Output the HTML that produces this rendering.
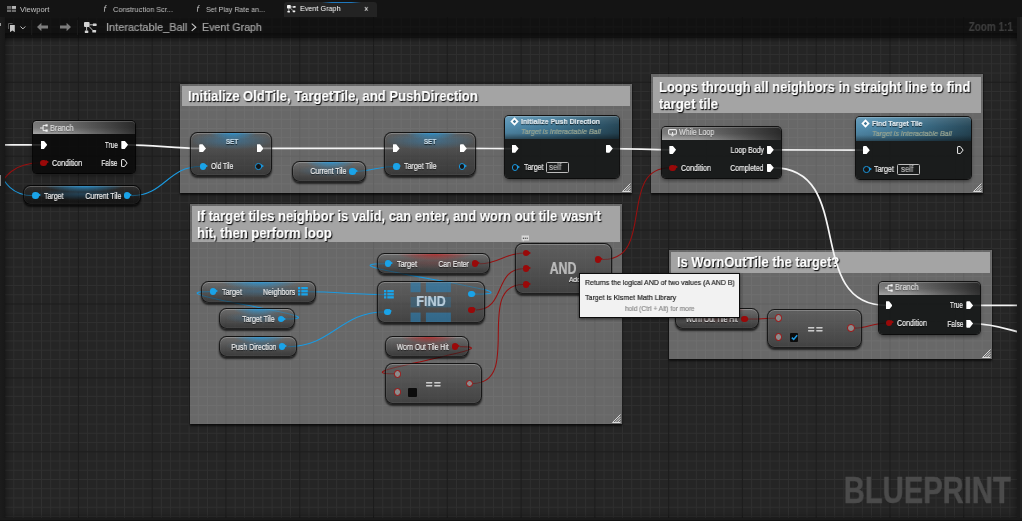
<!DOCTYPE html>
<html lang="en">
<head>
<meta charset="utf-8">
<title>Interactable_Ball - Event Graph</title>
<style>
*{box-sizing:border-box;margin:0;padding:0}
html,body{width:1022px;height:521px;overflow:hidden;background:#252525}
body{position:relative;font-family:"Liberation Sans",sans-serif;color:#e6e6e6;font-size:8.2px;line-height:1}
.abs{position:absolute}
#grid{position:absolute;left:0;top:0;width:1022px;height:521px}
#wires{position:absolute;left:0;top:0;width:1022px;height:521px;pointer-events:none}
/* chrome */
#tabbar{position:absolute;left:0;top:0;width:1022px;height:17px;background:#141414}
#acttab{position:absolute;left:284px;top:2px;width:92.5px;height:15px;background:#232323;border-radius:3px 3px 0 0}
#actline{position:absolute;left:322px;top:2px;width:39px;height:1px;background:linear-gradient(90deg,rgba(30,120,190,0),#1e78be 25%,#1e78be 75%,rgba(30,120,190,0))}
#toolbar{position:absolute;left:4.5px;top:17px;width:1013px;height:21px;background:rgba(9,9,9,.68)}
#tbshadow{position:absolute;left:4px;top:38px;width:1014px;height:4px;background:linear-gradient(rgba(0,0,0,.3),rgba(0,0,0,0))}
#rightstrip{position:absolute;left:1017px;top:17px;width:5px;height:504px;background:linear-gradient(90deg,#1b1b1b 0,#1b1b1b 55%,#222 56%)}
#vig{position:absolute;left:4.5px;top:33px;width:1012.4px;height:484.6px;box-shadow:inset 0 0 7px 0 rgba(0,0,0,.5);pointer-events:none}
#leftstrip{position:absolute;left:0;top:17px;width:4.5px;height:504px;background:linear-gradient(90deg,#1c1c1c,#181818)}
#botstrip{position:absolute;left:0;top:517.6px;width:1022px;height:3.4px;background:linear-gradient(180deg,#1b1b1b 0,#1b1b1b 62%,#121212 66%)}
.t.tb{color:#c2c2c2;text-shadow:none;-webkit-text-stroke:0}
.t.tb.act{color:#fff}
.t.tb.fi{font-style:italic;font-family:"Liberation Serif",serif;color:#d4d4d4}
.t.cr{color:#a4a4a4;text-shadow:none}
.t.zm{color:#3d3d3d;text-shadow:none;font-weight:bold}
.t.wm{color:#4b4b4b;text-shadow:none;font-weight:bold;-webkit-text-stroke:.5px #4b4b4b}
/* comments */
.comment{position:absolute;background:rgba(228,228,228,.35);box-shadow:0 1.5px 2px rgba(0,0,0,.65),0 0 0 .5px rgba(0,0,0,.35)}
.comment .ct{position:absolute;left:2px;top:2.3px;right:2px;background:#a4a4a4}
.t.ttl{font-weight:bold;color:#fff;text-shadow:1px 1px 0 #1a1a1a,1px 1px 1.5px #000}
.grip{position:absolute;right:1px;bottom:1px;width:9px;height:9px}
/* nodes */
.node{position:absolute;border-radius:4px;background:rgba(9,9,9,.86);box-shadow:0 0 0 1px rgba(0,0,0,.8),0 2px 4px rgba(0,0,0,.55)}
.node.lt{background:rgba(13,15,15,.86)}
.node .hd{position:absolute;left:0;top:0;right:0;border-radius:3.5px 3.5px 0 0}
.hd.gray{height:13.1px;background:linear-gradient(90deg,rgba(22,22,22,0) 0%,rgba(22,22,22,.1) 30%,rgba(22,22,22,.8) 100%),linear-gradient(180deg,#747474 0%,#7c7c7c 50%,#a6a6a6 100%);box-shadow:inset 0 1px 0 rgba(255,255,255,.18)}
.hd.blue{height:23.4px;background:linear-gradient(180deg,rgba(255,255,255,.12),rgba(255,255,255,0) 40%,rgba(0,0,0,.12) 75%,rgba(10,14,16,.55) 100%),linear-gradient(100deg,#5792b3,#427a98 40%,#264656 100%);box-shadow:inset 0 1px 0 rgba(255,255,255,.2)}
.t{position:absolute;white-space:nowrap;color:#f0f0f0;text-shadow:0 1px 1px rgba(0,0,0,.8);will-change:transform;-webkit-text-stroke:.2px currentColor}
.t.b{font-weight:bold;color:#e2ecf2}
.t.b.set{color:#c6dbe8}
.t.i{font-style:italic;color:#9ba792;text-shadow:none}
.t.h{color:#dedede;text-shadow:0 1px 1px rgba(0,0,0,.35)}
.t.sf{color:#b4b4b4;text-shadow:none}
.t.big{font-weight:bold;text-shadow:none}
.t.tp{color:#1c1c1c;text-shadow:none}
.t.tp2{color:#8c8c8c;text-shadow:none}
.tip{position:absolute;background:#f2f2f2;border:1px solid #0c0c0c;box-shadow:0 1px 3px rgba(0,0,0,.6)}
/* pins */
.ex{position:absolute;width:6.8px;height:8.2px;background:#fff;clip-path:polygon(0 8%,8% 0,50% 0,100% 50%,50% 100%,8% 100%,0 92%)}
.exo{position:absolute;width:6.8px;height:8.2px}
.pin{position:absolute;width:6.5px;height:6.5px;border-radius:50%}
.pin:after{content:"";position:absolute;left:5.4px;top:.85px;border-left:3.6px solid;border-top:2.4px solid transparent;border-bottom:2.4px solid transparent;border-left-color:inherit}
.pin.bl{background:#1aa3e8;border-color:#1aa3e8}
.pin.rd{background:#990909;border-color:#990909}
.pin.o{background:#161616;border:1.4px solid}
.pin.o:after{left:4.6px;top:-.4px}
.pin.o.bl{border-color:#1b96dc}
.ring{position:absolute;width:7.8px;height:7.8px;border-radius:50%;border:1.5px solid #a00e0e;background:#8c8c8c}
.self{position:absolute;border:1px solid #bdbdbd;border-radius:1.5px}
/* variable / compact nodes */
.var{position:absolute;border-radius:7.5px;border:1px solid rgba(0,0,0,.68);box-shadow:inset 0 1px 0 rgba(255,255,255,.2),inset 0 0 0 1px rgba(255,255,255,.04),0 2px 2px rgba(0,0,0,.7);background:linear-gradient(180deg,rgba(112,112,112,.56),rgba(66,66,66,.56) 50%,rgba(26,26,26,.58) 100%)}
.var.st{background:linear-gradient(180deg,rgba(86,86,86,.56),rgba(46,46,46,.57) 55%,rgba(26,26,26,.58))}
.var.dk{background:linear-gradient(180deg,rgba(54,54,54,.56),rgba(28,28,28,.56) 50%,rgba(6,6,6,.6) 100%)}
.var.cmp{background:linear-gradient(180deg,rgba(88,88,88,.56),rgba(40,40,40,.58))}
.var .glow{position:absolute;left:2%;right:2%;top:0;height:100%;border-radius:7px}
.glow.bl{background:radial-gradient(ellipse 36% 34% at 52% 0,rgba(40,150,215,.85),rgba(40,150,215,0)),radial-gradient(ellipse 46% 32% at 50% 46%,rgba(40,140,205,.3),rgba(40,140,205,0))}
.glow.rd{background:radial-gradient(ellipse 36% 34% at 52% 0,rgba(185,35,35,.8),rgba(185,35,35,0)),radial-gradient(ellipse 46% 32% at 50% 46%,rgba(170,40,40,.2),rgba(170,40,40,0))}
.var .glow.set{background:radial-gradient(ellipse 30% 16% at 52% 0,rgba(40,150,215,.8),rgba(40,150,215,0)),radial-gradient(ellipse 55% 22% at 50% 18%,rgba(40,140,205,.45),rgba(40,140,205,0))}
</style>
</head>
<body>
<svg id="grid" width="1022" height="521"><rect width="1022" height="521" fill="#252525"/><path d="M13.84 0V521M23.07 0V521M32.29 0V521M41.51 0V521M50.73 0V521M59.95 0V521M69.18 0V521M87.62 0V521M96.84 0V521M106.07 0V521M115.29 0V521M124.51 0V521M133.74 0V521M142.96 0V521M161.4 0V521M170.62 0V521M179.85 0V521M189.07 0V521M198.29 0V521M207.52 0V521M216.74 0V521M235.18 0V521M244.41 0V521M253.63 0V521M262.85 0V521M272.07 0V521M281.3 0V521M290.52 0V521M308.96 0V521M318.19 0V521M327.41 0V521M336.63 0V521M345.85 0V521M355.07 0V521M364.3 0V521M382.74 0V521M391.97 0V521M401.19 0V521M410.41 0V521M419.63 0V521M428.86 0V521M438.08 0V521M456.52 0V521M465.75 0V521M474.97 0V521M484.19 0V521M493.41 0V521M502.63 0V521M511.86 0V521M530.3 0V521M539.52 0V521M548.75 0V521M557.97 0V521M567.19 0V521M576.41 0V521M585.64 0V521M604.08 0V521M613.31 0V521M622.53 0V521M631.75 0V521M640.97 0V521M650.2 0V521M659.42 0V521M677.86 0V521M687.09 0V521M696.31 0V521M705.53 0V521M714.75 0V521M723.98 0V521M733.2 0V521M751.64 0V521M760.87 0V521M770.09 0V521M779.31 0V521M788.53 0V521M797.75 0V521M806.98 0V521M825.42 0V521M834.64 0V521M843.87 0V521M853.09 0V521M862.31 0V521M871.53 0V521M880.76 0V521M899.2 0V521M908.43 0V521M917.65 0V521M926.87 0V521M936.09 0V521M945.32 0V521M954.54 0V521M972.98 0V521M982.21 0V521M991.43 0V521M1000.65 0V521M1009.87 0V521M1019.1 0V521M0 17.64H1022M0 26.88H1022M0 36.11H1022M0 45.35H1022M0 54.59H1022M0 63.83H1022M0 73.06H1022M0 91.54H1022M0 100.78H1022M0 110.01H1022M0 119.25H1022M0 128.49H1022M0 137.73H1022M0 146.96H1022M0 165.44H1022M0 174.68H1022M0 183.91H1022M0 193.15H1022M0 202.39H1022M0 211.63H1022M0 220.86H1022M0 239.34H1022M0 248.58H1022M0 257.81H1022M0 267.05H1022M0 276.29H1022M0 285.52H1022M0 294.76H1022M0 313.24H1022M0 322.48H1022M0 331.71H1022M0 340.95H1022M0 350.19H1022M0 359.43H1022M0 368.66H1022M0 387.14H1022M0 396.38H1022M0 405.61H1022M0 414.85H1022M0 424.09H1022M0 433.32H1022M0 442.56H1022M0 461.04H1022M0 470.28H1022M0 479.51H1022M0 488.75H1022M0 497.99H1022M0 507.23H1022M0 516.46H1022" stroke="#303030" stroke-width="1" fill="none"/><path d="M4.62 0V521M78.4 0V521M152.18 0V521M225.96 0V521M299.74 0V521M373.52 0V521M447.3 0V521M521.08 0V521M594.86 0V521M668.64 0V521M742.42 0V521M816.2 0V521M889.98 0V521M963.76 0V521M0 8.4H1022M0 82.3H1022M0 156.2H1022M0 230.1H1022M0 304.0H1022M0 377.9H1022M0 451.8H1022" stroke="#1d1d1d" stroke-width="1" fill="none"/></svg>
<!-- COMMENTS -->
<div class="comment" style="left:180.3px;top:83.5px;width:451.6px;height:109.5px"><div class="ct" style="height:20.6px"></div><svg class="grip" viewBox="0 0 9 9" stroke="#e4e4e4" stroke-width=".9" fill="none"><path d="M.5 8.5L8.5 .5M2.9 8.5L8.5 2.9M5.3 8.5L8.5 5.3M7.6 8.5L8.5 7.6M.5 8.5H8.5"/></svg></div>
<div class="t ttl" style="left:187.5px;transform-origin:0 50%;transform:scaleX(0.847);top:87.16px;font-size:15.4px;line-height:18.48px;">Initialize OldTile, TargetTile, and PushDirection</div>
<div class="comment" style="left:650.8px;top:74.3px;width:332.0px;height:118.9px"><div class="ct" style="height:36.2px"></div><svg class="grip" viewBox="0 0 9 9" stroke="#e4e4e4" stroke-width=".9" fill="none"><path d="M.5 8.5L8.5 .5M2.9 8.5L8.5 2.9M5.3 8.5L8.5 5.3M7.6 8.5L8.5 7.6M.5 8.5H8.5"/></svg></div>
<div class="t ttl" style="left:658.5px;transform-origin:0 50%;transform:scaleX(0.843);top:78.36px;font-size:15.4px;line-height:18.48px;">Loops through all neighbors in straight line to find</div>
<div class="t ttl" style="left:658.5px;transform-origin:0 50%;transform:scaleX(0.851);top:94.76px;font-size:15.4px;line-height:18.48px;">target tile</div>
<div class="comment" style="left:189.6px;top:203.6px;width:432.7px;height:220.2px"><div class="ct" style="height:36.6px"></div><svg class="grip" viewBox="0 0 9 9" stroke="#e4e4e4" stroke-width=".9" fill="none"><path d="M.5 8.5L8.5 .5M2.9 8.5L8.5 2.9M5.3 8.5L8.5 5.3M7.6 8.5L8.5 7.6M.5 8.5H8.5"/></svg></div>
<div class="t ttl" style="left:197.3px;transform-origin:0 50%;transform:scaleX(0.846);top:207.36px;font-size:15.4px;line-height:18.48px;">If target tiles neighbor is valid, can enter, and worn out tile wasn't</div>
<div class="t ttl" style="left:197.3px;transform-origin:0 50%;transform:scaleX(0.848);top:223.76px;font-size:15.4px;line-height:18.48px;">hit, then perform loop</div>
<div class="comment" style="left:669px;top:250px;width:322.5px;height:109.4px"><div class="ct" style="height:20.4px"></div><svg class="grip" viewBox="0 0 9 9" stroke="#e4e4e4" stroke-width=".9" fill="none"><path d="M.5 8.5L8.5 .5M2.9 8.5L8.5 2.9M5.3 8.5L8.5 5.3M7.6 8.5L8.5 7.6M.5 8.5H8.5"/></svg></div>
<div class="t ttl" style="left:677.2px;transform-origin:0 50%;transform:scaleX(0.842);top:252.86px;font-size:15.4px;line-height:18.48px;">Is WornOutTile the target?</div>
<!-- WIRES -->
<svg id="wires" width="1022" height="521" fill="none" stroke-linecap="round">
<path d="M-30 144.8C-6.3 144.8 17.3 144.8 41 144.8" stroke="#f4f4f4" stroke-width="1.75"/>
<path d="M128 144.8C153.2 144.8 174.8 148.4 200 148.4" stroke="#f4f4f4" stroke-width="1.75"/>
<path d="M263 148.4C306.5 148.4 350.0 148.4 393.5 148.4" stroke="#f4f4f4" stroke-width="1.75"/>
<path d="M466.5 148.4C481.9 148.4 497.1 148.6 512.5 148.6" stroke="#f4f4f4" stroke-width="1.75"/>
<path d="M612.5 148.6C632.1 148.6 650.4 149.8 670 149.8" stroke="#f4f4f4" stroke-width="1.75"/>
<path d="M773.5 149.8C803.8 149.8 833.7 150.2 864 150.2" stroke="#f4f4f4" stroke-width="1.75"/>
<path d="M773.5 167.8C857.0 167.8 803.0 305.4 886.5 305.4" stroke="#f4f4f4" stroke-width="1.75"/>
<path d="M973 305.4C995.3 305.4 1017.7 305.4 1040 305.4" stroke="#f4f4f4" stroke-width="1.75"/>
<path d="M973 323.6C1003.0 323.6 1020.0 336.6 1050 336.6" stroke="#f4f4f4" stroke-width="1.75"/>
<path d="M-2 190C4 176 14 163 41 162.8" stroke="#981010" stroke-width="1.05"/>
<path d="M-2 170C4 182 12 195.6 33 195.6" stroke="#1b9ae0" stroke-width="1.05"/>
<path d="M132 195.6C164.5 195.6 167.7 166.4 200.2 166.4" stroke="#1b9ae0" stroke-width="1.05"/>
<path d="M357.5 171.3C371.1 171.3 379.9 166.4 393.5 166.4" stroke="#1b9ae0" stroke-width="1.05"/>
<path d="M480 263.7C498.0 263.7 505.4 253.1 523.4 253.1" stroke="#981010" stroke-width="1.05"/>
<path d="M476.2 309.9C505.7 309.9 493.9 268.7 523.4 268.7" stroke="#981010" stroke-width="1.05"/>
<path d="M473.2 383.4C522.9 383.4 473.7 284.4 523.4 284.4" stroke="#981010" stroke-width="1.05"/>
<path d="M460 346.6C517.7 346.6 336.1 373.7 393.8 373.7" stroke="#981010" stroke-width="1.05"/>
<path d="M308 291.8C334.4 291.8 358.1 294.6 384.5 294.6" stroke="#1b9ae0" stroke-width="1.05"/>
<path d="M285.8 319C350.2 319 145.4 291.6 209.8 291.6" stroke="#1b9ae0" stroke-width="1.05"/>
<path d="M288 346.7C331.8 346.7 340.7 311.9 384.5 311.9" stroke="#1b9ae0" stroke-width="1.05"/>
<path d="M476.2 294.1C552.2 294.1 309.0 263.7 385 263.7" stroke="#1b9ae0" stroke-width="1.05"/>
<path d="M603 259.5C655.9 259.5 617.1 167.8 670 167.8" stroke="#981010" stroke-width="1.05"/>
<path d="M749.2 319C758.0 319 766.2 318.3 775 318.3" stroke="#981010" stroke-width="1.05"/>
<path d="M854.5 328.1C866.9 328.1 874.0 322.9 886.4 322.9" stroke="#981010" stroke-width="1.05"/>
</svg>
<!-- NODES -->
<div class="var dk" style="left:23.4px;top:184.6px;width:117.4px;height:20.6px;"><div class="glow bl"></div></div>
<div class="var st" style="left:190.4px;top:132.4px;width:82.0px;height:44.0px;"><div class="glow bl set"></div></div>
<div class="var" style="left:291.5px;top:160.5px;width:74.8px;height:21.1px;"><div class="glow bl"></div></div>
<div class="var st" style="left:384.2px;top:132.4px;width:92.0px;height:44.0px;"><div class="glow bl set"></div></div>
<div class="var" style="left:376.5px;top:252.8px;width:113.1px;height:21.5px;"><div class="glow rd"></div></div>
<div class="var" style="left:200.6px;top:280.8px;width:115.1px;height:22.3px;"><div class="glow bl"></div></div>
<div class="var cmp" style="left:376.5px;top:280.6px;width:108.1px;height:42.1px;overflow:hidden"><svg class="abs" style="left:0;top:0" width="108" height="42" viewBox="0 0 108 42" fill="rgba(38,135,195,.55)"><rect x="32.6" y=".4" width="10" height="9.8"/><rect x="47.9" y=".4" width="25" height="9.8"/><rect x="32.6" y="15" width="10" height="10.4" opacity=".55"/><rect x="47.9" y="15" width="25" height="10.4" opacity=".55"/><rect x="32.6" y="30.6" width="10" height="10.4"/><rect x="47.9" y="30.6" width="25" height="10.4"/></svg></div>
<div class="var" style="left:219.3px;top:308.3px;width:75.5px;height:21.0px;"><div class="glow bl"></div></div>
<div class="var" style="left:219.3px;top:335.9px;width:77.8px;height:21.3px;"><div class="glow bl"></div></div>
<div class="var" style="left:385.2px;top:335.9px;width:84.3px;height:21.2px;"><div class="glow rd"></div></div>
<div class="var cmp" style="left:385.2px;top:363.4px;width:96.9px;height:40.2px;"></div>
<div class="var cmp" style="left:514.5px;top:243px;width:97.0px;height:50.8px;"></div>
<div class="var" style="left:674.8px;top:308.2px;width:83.8px;height:21.3px;"><div class="glow rd"></div></div>
<div class="var cmp" style="left:767px;top:308.6px;width:95.3px;height:39.4px;"></div>
<div class="node" style="left:33.1px;top:120.8px;width:102.1px;height:52.5px;"><div class="hd gray"></div></div>
<div class="node lt" style="left:504.8px;top:115.6px;width:114.7px;height:62.0px;"><div class="hd blue"></div></div>
<div class="node lt" style="left:662.1px;top:126.7px;width:119.1px;height:51.2px;"><div class="hd gray"></div></div>
<div class="node lt" style="left:856.1px;top:117.4px;width:114.7px;height:62.1px;"><div class="hd blue"></div></div>
<div class="node lt" style="left:878.8px;top:281.8px;width:101.5px;height:52.2px;"><div class="hd gray"></div></div>
<svg class="abs" style="left:40px;top:123.6px" width="8" height="8" viewBox="0 0 8 8" fill="none" stroke="#f4f4f4" stroke-width=".95"><path d="M0 4H3.1M6 1.4H3.1V6.6H6"/><rect x="5.5" y=".3" width="2.2" height="2.2" fill="#f4f4f4" stroke="none"/><rect x="5.5" y="5.5" width="2.2" height="2.2" fill="#f4f4f4" stroke="none"/></svg>
<div class="t h" style="left:49.7px;transform-origin:0 50%;transform:scaleX(0.887);top:122.66px;font-size:8.4px;line-height:10.08px;">Branch</div>
<div class="ex" style="left:40.5px;top:140.7px"></div>
<div class="t " style="right:904.2px;transform-origin:100% 50%;transform:scaleX(0.772);top:139.76px;font-size:8.4px;line-height:10.08px;">True</div>
<div class="ex" style="left:121.3px;top:140.7px"></div>
<div class="pin rd" style="left:40.3px;top:159.55px"></div>
<div class="t " style="left:52px;transform-origin:0 50%;transform:scaleX(0.851);top:157.76px;font-size:8.4px;line-height:10.08px;">Condition</div>
<div class="t " style="right:904.2px;transform-origin:100% 50%;transform:scaleX(0.784);top:158.26px;font-size:8.4px;line-height:10.08px;">False</div>
<svg class="exo" style="left:121.3px;top:159.2px" viewBox="0 0 7 8.6" preserveAspectRatio="none"><path d="M.6 1.2Q.6.6 1.2.6H3.4L6.3 4.3 3.4 8H1.2Q.6 8 .6 7.4Z" fill="none" stroke="#fff" stroke-width="1"/></svg>
<div class="pin bl" style="left:32.2px;top:192.35px"></div>
<div class="t " style="left:44.1px;transform-origin:0 50%;transform:scaleX(0.835);top:190.56px;font-size:8.4px;line-height:10.08px;">Target</div>
<div class="t " style="right:900.4px;transform-origin:100% 50%;transform:scaleX(0.829);top:190.56px;font-size:8.4px;line-height:10.08px;">Current Tile</div>
<div class="pin bl" style="left:123.9px;top:192.35px"></div>
<div class="t b set" style="left:231.5px;transform:translateX(-50%) scaleX(0.791);top:136.7px;font-size:8px;line-height:9.6px;">SET</div>
<div class="ex" style="left:199.2px;top:144.3px"></div>
<div class="ex" style="left:256.7px;top:144.3px"></div>
<div class="pin bl" style="left:199.6px;top:163.15px"></div>
<div class="t " style="left:210.9px;transform-origin:0 50%;transform:scaleX(0.783);top:161.36px;font-size:8.4px;line-height:10.08px;">Old Tile</div>
<div class="pin bl o" style="left:255.3px;top:163.15px"></div>
<div class="t " style="right:675.3px;transform-origin:100% 50%;transform:scaleX(0.829);top:166.26px;font-size:8.4px;line-height:10.08px;">Current Tile</div>
<div class="pin bl" style="left:349.3px;top:168.05px"></div>
<div class="t b set" style="left:430.3px;transform:translateX(-50%) scaleX(0.791);top:136.7px;font-size:8px;line-height:9.6px;">SET</div>
<div class="ex" style="left:392.8px;top:144.3px"></div>
<div class="ex" style="left:460px;top:144.3px"></div>
<div class="pin bl" style="left:393px;top:163.15px"></div>
<div class="t " style="left:404.4px;transform-origin:0 50%;transform:scaleX(0.841);top:161.36px;font-size:8.4px;line-height:10.08px;">Target Tile</div>
<div class="pin bl o" style="left:458.7px;top:163.15px"></div>
<svg class="abs" style="left:509.8px;top:117.2px" width="9" height="9" viewBox="0 0 8.4 8.4"><path d="M4.2 .3L8.1 4.2 4.2 8.1 .3 4.2Z" fill="#fff"/><path d="M4.2 2.6L5.8 4.2 4.2 5.8 2.6 4.2Z" fill="#3f7797"/></svg>
<div class="t b" style="left:521px;transform-origin:0 50%;transform:scaleX(0.875);top:116.8px;font-size:8px;line-height:9.6px;">Initialize Push Direction</div>
<div class="t i" style="left:521px;transform-origin:0 50%;transform:scaleX(0.886);top:126.8px;font-size:8px;line-height:9.6px;">Target is Interactable Ball</div>
<div class="ex" style="left:511.8px;top:144.5px"></div>
<div class="ex" style="left:606px;top:144.5px"></div>
<div class="pin bl o" style="left:511.8px;top:164.25px"></div>
<div class="t " style="left:523.5px;transform-origin:0 50%;transform:scaleX(0.835);top:162.46px;font-size:8.4px;line-height:10.08px;">Target</div>
<div class="self" style="left:546px;top:162.1px;width:23px;height:10.7px"></div>
<div class="t sf" style="left:549.3px;transform-origin:0 50%;transform:scaleX(0.941);top:162.46px;font-size:8.4px;line-height:10.08px;">self</div>
<svg class="abs" style="left:667.6px;top:128.6px" width="9" height="8" viewBox="0 0 9 8" fill="none" stroke="#e8e8e8" stroke-width="1.1"><rect x=".6" y=".6" width="7.8" height="4.6" rx="1"/><path d="M2.6 6.2L4.5 7.6 6.4 6.2Z" fill="#e8e8e8" stroke="none"/><path d="M4.5 3V6"/></svg>
<div class="t h" style="left:678.6px;transform-origin:0 50%;transform:scaleX(0.840);top:127.46px;font-size:8.4px;line-height:10.08px;">While Loop</div>
<div class="ex" style="left:669.3px;top:145.7px"></div>
<div class="t " style="right:258.2px;transform-origin:100% 50%;transform:scaleX(0.836);top:144.76px;font-size:8.4px;line-height:10.08px;">Loop Body</div>
<div class="ex" style="left:767px;top:145.7px"></div>
<div class="pin rd" style="left:669.3px;top:164.55px"></div>
<div class="t " style="left:680.6px;transform-origin:0 50%;transform:scaleX(0.845);top:162.76px;font-size:8.4px;line-height:10.08px;">Condition</div>
<div class="t " style="right:258.2px;transform-origin:100% 50%;transform:scaleX(0.820);top:162.76px;font-size:8.4px;line-height:10.08px;">Completed</div>
<div class="ex" style="left:767px;top:163.7px"></div>
<svg class="abs" style="left:861px;top:118.8px" width="9" height="9" viewBox="0 0 8.4 8.4"><path d="M4.2 .3L8.1 4.2 4.2 8.1 .3 4.2Z" fill="#fff"/><path d="M4.2 2.6L5.8 4.2 4.2 5.8 2.6 4.2Z" fill="#3f7797"/></svg>
<div class="t b" style="left:872.3px;transform-origin:0 50%;transform:scaleX(0.857);top:118.5px;font-size:8px;line-height:9.6px;">Find Target Tile</div>
<div class="t i" style="left:872.3px;transform-origin:0 50%;transform:scaleX(0.886);top:128.6px;font-size:8px;line-height:9.6px;">Target is Interactable Ball</div>
<div class="ex" style="left:863px;top:146.1px"></div>
<svg class="exo" style="left:957.4px;top:146.1px" viewBox="0 0 7 8.6" preserveAspectRatio="none"><path d="M.6 1.2Q.6.6 1.2.6H3.4L6.3 4.3 3.4 8H1.2Q.6 8 .6 7.4Z" fill="none" stroke="#fff" stroke-width="1"/></svg>
<div class="pin bl o" style="left:863px;top:166.15px"></div>
<div class="t " style="left:874.4px;transform-origin:0 50%;transform:scaleX(0.848);top:164.36px;font-size:8.4px;line-height:10.08px;">Target</div>
<div class="self" style="left:897.4px;top:164px;width:22.4px;height:10.7px"></div>
<div class="t sf" style="left:900.6px;transform-origin:0 50%;transform:scaleX(0.941);top:164.36px;font-size:8.4px;line-height:10.08px;">self</div>
<div class="pin bl" style="left:384.8px;top:260.45px"></div>
<div class="t " style="left:396.9px;transform-origin:0 50%;transform:scaleX(0.857);top:258.66px;font-size:8.4px;line-height:10.08px;">Target</div>
<div class="t " style="right:553.2px;transform-origin:100% 50%;transform:scaleX(0.801);top:258.66px;font-size:8.4px;line-height:10.08px;">Can Enter</div>
<div class="pin rd" style="left:471.9px;top:260.45px"></div>
<div class="pin bl" style="left:209.8px;top:288.35px"></div>
<div class="t " style="left:221.6px;transform-origin:0 50%;transform:scaleX(0.852);top:286.56px;font-size:8.4px;line-height:10.08px;">Target</div>
<div class="t " style="right:727.2px;transform-origin:100% 50%;transform:scaleX(0.844);top:286.76px;font-size:8.4px;line-height:10.08px;">Neighbors</div>
<svg class="abs" style="left:298px;top:287.4px" width="9.8" height="8.8" viewBox="0 0 9.8 8.8" fill="#1aa3e8"><rect x="0" y="0.0" width="2.3" height="2.3"/><rect x="3.3" y="0.0" width="6.5" height="2.3"/><rect x="0" y="3.1" width="2.3" height="2.3"/><rect x="3.3" y="3.1" width="6.5" height="2.3"/><rect x="0" y="6.2" width="2.3" height="2.3"/><rect x="3.3" y="6.2" width="6.5" height="2.3"/></svg>
<div class="t big" style="left:431px;transform:translateX(-50%) scaleX(0.849);top:293.46px;font-size:14.9px;line-height:17.88px;color:rgba(205,225,238,.85)">FIND</div>
<svg class="abs" style="left:384px;top:290.2px" width="9.8" height="8.8" viewBox="0 0 9.8 8.8" fill="#1aa3e8"><rect x="0" y="0.0" width="2.3" height="2.3"/><rect x="3.3" y="0.0" width="6.5" height="2.3"/><rect x="0" y="3.1" width="2.3" height="2.3"/><rect x="3.3" y="3.1" width="6.5" height="2.3"/><rect x="0" y="6.2" width="2.3" height="2.3"/><rect x="3.3" y="6.2" width="6.5" height="2.3"/></svg>
<div class="pin bl" style="left:384px;top:308.65px"></div>
<div class="pin bl" style="left:468px;top:290.85px"></div>
<div class="pin rd" style="left:468px;top:306.65px"></div>
<div class="t " style="right:747.3px;transform-origin:100% 50%;transform:scaleX(0.841);top:313.96px;font-size:8.4px;line-height:10.08px;">Target Tile</div>
<div class="pin bl" style="left:277.7px;top:315.75px"></div>
<div class="t " style="right:745.9px;transform-origin:100% 50%;transform:scaleX(0.829);top:341.66px;font-size:8.4px;line-height:10.08px;">Push Direction</div>
<div class="pin bl" style="left:278.9px;top:343.45px"></div>
<div class="t " style="right:573.3px;transform-origin:100% 50%;transform:scaleX(0.815);top:341.56px;font-size:8.4px;line-height:10.08px;">Worn Out Tile Hit</div>
<div class="pin rd" style="left:451.9px;top:343.35px"></div>
<div class="t big" style="left:434.4px;transform:translateX(-50%) scaleX(1.000);top:376.94px;font-size:11.6px;line-height:13.92px;color:rgba(255,255,255,.7);letter-spacing:1.4px">==</div>
<div class="ring" style="left:393.5px;top:369.8px"></div>
<div class="ring" style="left:393.5px;top:388.4px"></div>
<div class="ring" style="left:465.6px;top:379.5px"></div>
<div class="abs" style="left:407.8px;top:387.5px;width:9.4px;height:9.3px;background:#0c0c0c;border-radius:1px"></div>
<div class="t big" style="left:563.3px;transform:translateX(-50%) scaleX(0.751);top:258.56px;font-size:16.4px;line-height:19.68px;color:rgba(255,255,255,.6)">AND</div>
<div class="pin rd" style="left:522.8px;top:249.85px"></div>
<div class="pin rd" style="left:522.8px;top:265.45px"></div>
<div class="pin rd" style="left:522.8px;top:281.15px"></div>
<div class="pin rd" style="left:594.8px;top:256.25px"></div>
<div class="t " style="left:568.8px;transform-origin:0 50%;transform:scaleX(0.853);top:275.04px;font-size:7.6px;line-height:9.12px;">Add pin</div>
<svg class="abs" style="left:521.4px;top:234.8px" width="8.6" height="7.6" viewBox="0 0 8 7.4"><path d="M.4 .4H7.6V5.4H3L1.6 7V5.4H.4Z" fill="#d8d8d8"/><rect x="1.6" y="2.6" width="1.1" height="1.1" fill="#333"/><rect x="3.45" y="2.6" width="1.1" height="1.1" fill="#333"/><rect x="5.3" y="2.6" width="1.1" height="1.1" fill="#333"/></svg>
<div class="t " style="right:284px;transform-origin:100% 50%;transform:scaleX(0.815);top:313.96px;font-size:8.4px;line-height:10.08px;">Worn Out Tile Hit</div>
<div class="pin rd" style="left:741px;top:315.75px"></div>
<div class="t big" style="left:816px;transform:translateX(-50%) scaleX(1.000);top:321.64px;font-size:11.6px;line-height:13.92px;color:rgba(255,255,255,.7);letter-spacing:1.4px">==</div>
<div class="ring" style="left:774.6px;top:314.4px"></div>
<div class="ring" style="left:774.6px;top:333.0px"></div>
<div class="ring" style="left:846.9px;top:324.2px"></div>
<div class="abs" style="left:789.7px;top:333px;width:8.8px;height:8.8px;background:#0c0c0c;border-radius:1px"><svg class="abs" style="left:0;top:0" width="8.8" height="8.8" viewBox="0 0 8.8 8.8"><path d="M1.8 4.6L3.7 6.4 7.2 2.2" fill="none" stroke="#1f9be3" stroke-width="1.5"/></svg></div>
<svg class="abs" style="left:884.8px;top:283.5px" width="8" height="8" viewBox="0 0 8 8" fill="none" stroke="#f4f4f4" stroke-width=".95"><path d="M0 4H3.1M6 1.4H3.1V6.6H6"/><rect x="5.5" y=".3" width="2.2" height="2.2" fill="#f4f4f4" stroke="none"/><rect x="5.5" y="5.5" width="2.2" height="2.2" fill="#f4f4f4" stroke="none"/></svg>
<div class="t h" style="left:894.8px;transform-origin:0 50%;transform:scaleX(0.887);top:282.46px;font-size:8.4px;line-height:10.08px;">Branch</div>
<div class="ex" style="left:885.7px;top:301.3px"></div>
<div class="t " style="right:59px;transform-origin:100% 50%;transform:scaleX(0.772);top:300.36px;font-size:8.4px;line-height:10.08px;">True</div>
<div class="ex" style="left:966.3px;top:301.3px"></div>
<div class="pin rd" style="left:885.7px;top:319.65px"></div>
<div class="t " style="left:897.3px;transform-origin:0 50%;transform:scaleX(0.845);top:317.86px;font-size:8.4px;line-height:10.08px;">Condition</div>
<div class="t " style="right:59px;transform-origin:100% 50%;transform:scaleX(0.784);top:318.56px;font-size:8.4px;line-height:10.08px;">False</div>
<div class="ex" style="left:966.3px;top:319.5px"></div>
<div class="tip" style="left:578.8px;top:272.6px;width:161.7px;height:45.8px"></div>
<div class="t tp" style="left:585px;transform-origin:0 50%;transform:scaleX(0.868);top:277.5px;font-size:8px;line-height:9.6px;">Returns the logical AND of two values (A AND B)</div>
<div class="t tp" style="left:585px;transform-origin:0 50%;transform:scaleX(0.880);top:293.3px;font-size:8px;line-height:9.6px;">Target is Kismet Math Library</div>
<div class="t tp2" style="left:625px;transform-origin:0 50%;transform:scaleX(0.897);top:305.12px;font-size:7.3px;line-height:8.76px;">hold (Ctrl + Alt) for more</div>
<!-- CHROME -->
<div id="toolbar"></div><div id="tbshadow"></div><div id="vig"></div><div id="leftstrip"></div><div id="rightstrip"></div><div id="botstrip"></div><div id="tabbar"></div><div id="acttab"></div><div id="actline"></div>
<svg class="abs" style="left:7px;top:5.6px" width="9" height="6.6" viewBox="0 0 9 6.6"><rect x="0" y="0" width="4.1" height="2.9" fill="#6c6c6c"/><rect x="4.8" y="0" width="4.2" height="2.9" fill="#b4b4b4"/><rect x="0" y="3.6" width="4.1" height="3" fill="#6c6c6c"/><rect x="4.8" y="3.6" width="4.2" height="3" fill="#6c6c6c"/></svg>
<div class="t tb" style="left:19.7px;transform-origin:0 50%;transform:scaleX(0.995);top:4.64px;font-size:7.6px;line-height:9.12px;">Viewport</div>
<div class="t tb fi" style="left:102.6px;transform-origin:0 50%;transform:scaleX(1.000);top:3.56px;font-size:8.4px;line-height:10.08px;">ƒ</div>
<div class="t tb" style="left:112.7px;transform-origin:0 50%;transform:scaleX(0.966);top:4.64px;font-size:7.6px;line-height:9.12px;">Construction Scr...</div>
<div class="t tb fi" style="left:195.8px;transform-origin:0 50%;transform:scaleX(1.000);top:3.56px;font-size:8.4px;line-height:10.08px;">ƒ</div>
<div class="t tb" style="left:206.2px;transform-origin:0 50%;transform:scaleX(0.931);top:4.64px;font-size:7.6px;line-height:9.12px;">Set Play Rate an...</div>
<svg class="abs" style="left:287px;top:5.2px" width="8.6" height="7.8" viewBox="0 0 12.6 11.4"><g fill="#f0f0f0"><rect x="0" y="0" width="5.6" height="5.1" rx="1"/><rect x="8.8" y="1.6" width="3.8" height="2.5" rx=".6"/><rect x=".8" y="8.4" width="3.5" height="2.7" rx=".6"/><rect x="8.3" y="7.9" width="3.8" height="2.7" rx=".6"/></g><path d="M5.6 2.8H8.8M2.6 5V8.4M5.2 4.6L8.6 8.2" stroke="#f0f0f0" stroke-width=".9" fill="none"/></svg>
<div class="t tb act" style="left:299.5px;transform-origin:0 50%;transform:scaleX(0.949);top:4.44px;font-size:7.6px;line-height:9.12px;">Event Graph</div>
<div class="t tb act" style="left:363.6px;transform-origin:0 50%;transform:scaleX(0.837);top:3.6px;font-size:9px;line-height:10.8px;">×</div>
<svg class="abs" style="left:8.4px;top:22.8px" width="7" height="9.4" viewBox="0 0 7 9.4"><path d="M.5 6V.5H4.6" fill="none" stroke="#5a5a5a" stroke-width="1"/><path d="M2 2H6.8V9.2L4.4 7.4 2 9.2Z" fill="#c4c4c4"/></svg>
<svg class="abs" style="left:19.8px;top:25.8px" width="5.8" height="3.6" viewBox="0 0 5.8 3.6"><path d="M.5 .5L2.9 2.9 5.3 .5" fill="none" stroke="#c4c4c4" stroke-width="1"/></svg>
<svg class="abs" style="left:37px;top:23.2px" width="11" height="8" viewBox="0 0 11 8" fill="#7c7c7c"><path d="M0 4L4.4 -.2V2.5H11V5.5H4.4V8.2Z"/></svg>
<svg class="abs" style="left:59.5px;top:23.2px" width="11" height="8" viewBox="0 0 11 8" fill="#7c7c7c"><path d="M11 4L6.6 -.2V2.5H0V5.5H6.6V8.2Z"/></svg>
<svg class="abs" style="left:84.3px;top:22px" width="12.6" height="11.4" viewBox="0 0 12.6 11.4"><g fill="#d2d2d2"><rect x="0" y="0" width="5.6" height="5.1" rx="1"/><rect x="8.8" y="1.6" width="3.8" height="2.5" rx=".6"/><rect x=".8" y="8.4" width="3.5" height="2.7" rx=".6"/><rect x="8.3" y="7.9" width="3.8" height="2.7" rx=".6"/></g><path d="M5.6 2.8H8.8M2.6 5V8.4M5.2 4.6L8.6 8.2" stroke="#d2d2d2" stroke-width=".9" fill="none"/></svg>
<div class="abs" style="left:31px;top:20px;width:1px;height:15px;background:#1a1a1a"></div><div class="abs" style="left:77px;top:20px;width:1px;height:15px;background:#1a1a1a"></div>
<div class="abs" style="left:0;top:23px;width:1px;height:3px;background:#9a9a9a"></div><div class="abs" style="left:0;top:175px;width:1.2px;height:11px;background:#8c8c8c"></div>
<div class="t cr" style="left:105.5px;transform-origin:0 50%;transform:scaleX(0.977);top:20.78px;font-size:11.2px;line-height:13.44px;">Interactable_Ball</div>
<svg class="abs" style="left:191.2px;top:23.4px" width="5.6" height="8.4" viewBox="0 0 5.6 8.4"><path d="M.7 .6L4.8 4.2 .7 7.8" fill="none" stroke="#d0d0d0" stroke-width="1.1"/></svg>
<div class="t cr" style="left:202px;transform-origin:0 50%;transform:scaleX(0.954);top:20.78px;font-size:11.2px;line-height:13.44px;">Event Graph</div>
<div class="t zm" style="right:9.2px;transform-origin:100% 50%;transform:scaleX(0.836);top:20.06px;font-size:11.9px;line-height:14.28px;">Zoom 1:1</div>
<div class="t wm" style="right:11.4px;transform-origin:100% 50%;transform:scaleX(0.785);top:467.88px;font-size:37.2px;line-height:44.64px;">BLUEPRINT</div>
</body>
</html>
